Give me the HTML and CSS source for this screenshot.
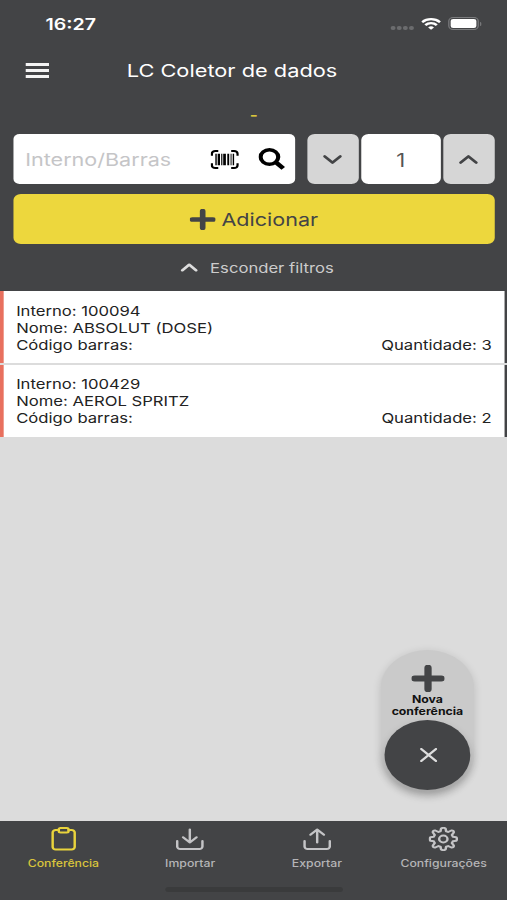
FILE: index.html
```html
<!DOCTYPE html>
<html lang="pt-br">
<head>
  <meta charset="UTF-8">
  <title>LC Coletor de dados</title>
  <link rel="stylesheet" href="styles.css">
</head>
<body>
  <div class="tela">
    <header class="topo">
      <div class="status">
        <span class="hora">16:27</span>
        <div class="sinais">
          <div class="pontos"><i></i><i></i><i></i><i></i></div>
          <svg class="wifi" viewBox="0 0 16 12" preserveAspectRatio="none">
            <g fill="none" stroke="#fff" stroke-width="2.2">
              <path d="M.7 4.2a10.4 10.4 0 0 1 14.6 0"/>
              <path d="M3.3 7.1a6.7 6.7 0 0 1 9.4 0"/>
            </g>
            <path d="M8 11.8 5.6 9.4a3.5 3.5 0 0 1 4.8 0z" fill="#fff"/>
          </svg>
          <div class="bateria"><div class="carga"></div></div>
        </div>
      </div>

      <div class="titulo">
        <div class="menu"><i></i><i></i><i></i></div>
        <h1>LC Coletor de dados</h1>
      </div>

      <div class="traco">-</div>

      <div class="busca">
        <div class="campo">
          <span class="dica">Interno/Barras</span>
          <svg class="barras" viewBox="0 0 24 20" preserveAspectRatio="none">
            <path d="M1 6V4a3 3 0 0 1 3-3h2.5M17.5 1H20a3 3 0 0 1 3 3v2M23 14v2a3 3 0 0 1-3 3h-2.5M6.5 19H4a3 3 0 0 1-3-3v-2" fill="none" stroke="#000" stroke-width="2"/>
            <path d="M4 4h1.2v12H4zM6 4h2v12H6zM9 4h1v12H9zM10.7 4H13v12h-2.3zM14.2 4h1.6v12h-1.6zM17 4h.8v12H17zM18.8 4H20v12h-1.2z"/>
          </svg>
          <svg class="lupa" viewBox="0 0 22 22" preserveAspectRatio="none">
            <circle cx="9" cy="9" r="7.2" fill="none" stroke="#000" stroke-width="3.4"/>
            <path d="M14 14l6.3 6.3" stroke="#000" stroke-width="4"/>
          </svg>
        </div>
        <div class="passo">
          <svg viewBox="0 0 16 16"><path d="M2 5l6 6 6-6"/></svg>
        </div>
        <div class="qtd">1</div>
        <div class="passo">
          <svg viewBox="0 0 16 16"><path d="M2 11l6-6 6 6"/></svg>
        </div>
      </div>

      <div class="adicionar">
        <svg class="mais" viewBox="0 0 20 20"><path d="M10 2v16M2 10h16"/></svg>
        <span>Adicionar</span>
      </div>

      <div class="filtros">
        <svg viewBox="0 0 16 16"><path d="M2 11l6-6 6 6"/></svg>
        <span>Esconder filtros</span>
      </div>
    </header>

    <main class="lista">
      <div class="item">
        <div>Interno: 100094</div>
        <div>Nome: ABSOLUT (DOSE)</div>
        <div class="linha"><span>Código barras:</span><span>Quantidade: 3</span></div>
      </div>
      <div class="item">
        <div>Interno: 100429</div>
        <div>Nome: AEROL SPRITZ</div>
        <div class="linha"><span>Código barras:</span><span>Quantidade: 2</span></div>
      </div>
    </main>

    <!-- Botão flutuante -->
    <div class="flutuante">
      <svg class="mais" viewBox="0 0 20 20"><path d="M10 2v16M2 10h16"/></svg>
      <div class="nova">Nova<br>conferência</div>
      <div class="fechar">
        <svg viewBox="0 0 14 14"><path d="M1 1l12 12M13 1L1 13"/></svg>
      </div>
    </div>

    <nav class="abas">
      <div class="aba ativa">
        <svg viewBox="0 0 24 24">
          <path d="M8 3H5.500a2.500 2.500 0 0 0-2.500 2.500v14.500a2.500 2.500 0 0 0 2.500 2.500h13a2.500 2.500 0 0 0 2.500-2.500V5.500a2.500 2.500 0 0 0-2.500-2.500H16"/>
          <rect x="8" y="1" width="8" height="4.5" rx="1.5"/>
        </svg>
        <span>Conferência</span>
      </div>
      <div class="aba">
        <svg viewBox="0 0 24 24">
          <path d="M12 2.5v13M6.5 10.3L12 15.5l5.5-5.2M1.7 14v5.5a2.500 2.500 0 0 0 2.500 2.500h15.600a2.500 2.500 0 0 0 2.500-2.500V14"/>
        </svg>
        <span>Importar</span>
      </div>
      <div class="aba">
        <svg viewBox="0 0 24 24">
          <path d="M12 15.5v-13M6.5 7.7L12 2.5l5.5 5.2M1.7 14v5.5a2.500 2.500 0 0 0 2.500 2.500h15.600a2.500 2.500 0 0 0 2.500-2.500V14"/>
        </svg>
        <span>Exportar</span>
      </div>
      <div class="aba">
        <svg viewBox="0 0 24 24">
          <path d="M10.2 1.5Q12 .2 13.8 1.5L14.3 4.2Q15.3 4.5 16 5L18.5 3.5Q20.8 3.2 20.5 5.5L19 8Q19.5 8.7 19.8 9.7L22.5 10.2Q23.8 12 22.5 13.8L19.8 14.3Q19.5 15.3 19 16L20.5 18.5Q20.8 20.8 18.5 20.5L16 19Q15.3 19.5 14.3 19.8L13.8 22.5Q12 23.8 10.2 22.5L9.7 19.8Q8.7 19.5 8 19L5.5 20.5Q3.2 20.8 3.5 18.5L5 16Q4.5 15.3 4.2 14.3L1.5 13.8Q.2 12 1.5 10.2L4.2 9.7Q4.5 8.7 5 8L3.5 5.5Q3.2 3.2 5.5 3.5L8 5Q8.7 4.5 9.7 4.2Z"/>
          <circle cx="12" cy="12" r="3.4"/>
        </svg>
        <span>Configurações</span>
      </div>
      <div class="barra-inicio"></div>
    </nav>
  </div>
</body>
</html>
```
FILE: styles.css
```css
body {
  margin: 0;
  overflow: hidden;
  background: #dcdcdc;
  font-family: Inter, 'Liberation Sans', sans-serif;
}

.tela {
  position: relative;
  display: flex;
  flex-direction: column;
  width: 414px;
  height: 900px;
  background: #dcdcdc;
  transform: scaleX(1.22464);
  transform-origin: 0 0;
}

svg {
  display: block;
  fill: none;
  stroke-linecap: round;
  stroke-linejoin: round;
}

.topo {
  box-sizing: border-box;
  height: 291px;
  padding: 0 10px 0 10.6px;
  background: #434446;
  color: #fff;
}

.status {
  display: flex;
  justify-content: space-between;
  align-items: center;
  height: 47px;
  padding: 0 11px 0 26.5px;
}

.hora {
  font-size: 16px;
  font-weight: 600;
}

.sinais {
  display: flex;
  align-items: center;
}

.pontos {
  display: flex;
  gap: 1.5px;
  margin: 8px 6.5px 0 0;
}

.pontos i {
  width: 3.5px;
  height: 4px;
  border-radius: 50%;
  background: #6b6c6e;
}

.wifi {
  width: 16px;
  height: 12px;
  margin-right: 6px;
}

.sinais .wifi g {
  stroke-linecap: butt;
}

.bateria {
  position: relative;
  box-sizing: border-box;
  width: 25px;
  height: 13px;
  padding: 1px;
  border: 1px solid #7b7c7e;
  border-radius: 4px;
  margin-right: 2px;
}

.bateria::after {
  content: "";
  position: absolute;
  right: -3px;
  top: 3.5px;
  width: 1.5px;
  height: 4px;
  border-radius: 0 2px 2px 0;
  background: #7b7c7e;
}

.carga {
  height: 9px;
  border-radius: 2px;
  background: #fff;
}

.titulo {
  display: flex;
  align-items: center;
  height: 46px;
  padding-left: 10.4px;
}

.menu {
  display: flex;
  flex-direction: column;
  gap: 3px;
  width: 19px;
}

.menu i {
  height: 3px;
  background: #f4f4f4;
}

h1 {
  margin: 0 0 0 63.5px;
  font-size: 17.8px;
  font-weight: 400;
  white-space: nowrap;
}

.traco {
  height: 41px;
  line-height: 43px;
  text-align: center;
  font-size: 14px;
  font-weight: 700;
  color: #d9c53c;
}

.busca {
  display: flex;
  height: 50px;
}

.campo {
  box-sizing: border-box;
  display: flex;
  align-items: center;
  width: 230.2px;
  padding-left: 10px;
  margin-right: 10px;
  border-radius: 5px;
  background: #fff;
}

.dica {
  width: 151px;
  font-size: 17.6px;
  color: #c5c5c7;
}

.barras {
  width: 23px;
  height: 19px;
  fill: #000;
}

.barras path,
.lupa path {
  stroke-linecap: butt;
}

.lupa {
  width: 22px;
  height: 22px;
  margin-left: 16px;
}

.passo {
  display: flex;
  align-items: center;
  justify-content: center;
  width: 42.5px;
  border-radius: 6px;
  background: #d6d6d6;
}

.passo svg {
  width: 17px;
  height: 17px;
  stroke: #434446;
  stroke-width: 2.3;
}

.qtd {
  width: 64.5px;
  margin: 0 2px;
  border-radius: 6px;
  background: #fff;
  color: #555;
  font-size: 18px;
  line-height: 53px;
  text-align: center;
}

.adicionar {
  display: flex;
  align-items: center;
  justify-content: center;
  gap: 5px;
  height: 50px;
  margin-top: 10px;
  border-radius: 6px;
  background: #edd73d;
  color: #434446;
  font-size: 17.6px;
}

.mais {
  width: 21px;
  height: 21px;
  stroke: #434446;
  stroke-width: 4.4;
}

.filtros {
  display: flex;
  align-items: center;
  justify-content: center;
  gap: 9.5px;
  height: 47px;
  padding-left: 5px;
  color: #ccc;
  font-size: 13.6px;
}

.filtros svg {
  width: 15px;
  height: 15px;
  stroke: #ddd;
  stroke-width: 2.6;
}

.item {
  box-sizing: border-box;
  height: 72px;
  margin-bottom: 1.5px;
  padding: 11px 10.5px 0 10.2px;
  border-left: 3px solid #e8705e;
  border-right: 2px solid #434446;
  background: #fff;
  color: #222;
  font-size: 13.6px;
  line-height: 17.2px;
}

.item:first-child {
  padding-top: 11.6px;
}

.linha {
  display: flex;
  justify-content: space-between;
}

.flutuante {
  position: absolute;
  left: 311px;
  top: 650px;
  display: flex;
  flex-direction: column;
  align-items: center;
  width: 76px;
  height: 142px;
  border-radius: 38px;
  background: #cacaca;
  box-shadow: 0 2px 8px rgba(0, 0, 0, 0.15);
}

.flutuante .mais {
  width: 27px;
  height: 27px;
  margin: 15px 0 1px;
}

.nova {
  font-size: 10px;
  font-weight: 700;
  line-height: 12px;
  text-align: center;
  color: #111;
}

.fechar {
  display: flex;
  align-items: center;
  justify-content: center;
  width: 70px;
  height: 70px;
  margin-top: 3px;
  border-radius: 50%;
  background: #434446;
  box-shadow: 0 5px 9px rgba(0, 0, 0, 0.22);
}

.fechar svg {
  width: 14px;
  height: 14px;
  margin-left: 1px;
  stroke: #ddd;
  stroke-width: 2;
}

.abas {
  position: relative;
  display: flex;
  height: 79px;
  margin-top: auto;
  background: #434446;
}

.aba {
  display: flex;
  flex-direction: column;
  align-items: center;
  width: 25%;
  padding-top: 6px;
  color: #b5b5b7;
  font-size: 10px;
  font-weight: 500;
}

.aba svg {
  width: 24px;
  height: 24px;
  margin-bottom: 6px;
  stroke: #c4c4c6;
  stroke-width: 2;
}

.ativa {
  color: #d9c53c;
}

.ativa svg {
  stroke: #e9d33c;
}

/* indicador de início do aparelho */
.barra-inicio {
  position: absolute;
  left: 135px;
  bottom: 8px;
  width: 145px;
  height: 5px;
  border-radius: 3px;
  background: #3a3b3c;
}
```
